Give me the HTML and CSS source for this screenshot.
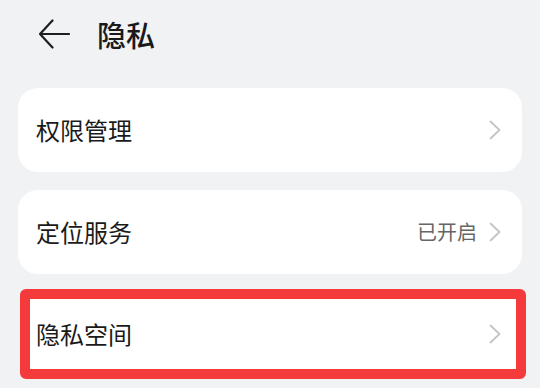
FILE: index.html
```html
<!DOCTYPE html>
<html lang="zh-CN">
  <head>
    <meta name="viewport" content="width=device-width, initial-scale=1.0" />
    <link rel="stylesheet" href="styles.css">
  </head>
  <body>
    <div class="header">
      <svg class="back" width="32" height="30" viewBox="0 0 32 30">
        <path d="M2 15 H31 M14.5 1.5 L2 15 L14.5 28.5" fill="none" stroke="#1f1f1f" stroke-width="2.2" stroke-linecap="round" stroke-linejoin="round" />
      </svg>
      <h1>隐私</h1>
    </div>

    <div class="list">
      <div class="card">
        <span class="label">权限管理</span>
        <svg class="chevron" width="12" height="20" viewBox="0 0 12 20">
          <path d="M1.5 1.5 L10.5 10 L1.5 18.5" fill="none" stroke="#c4c4c4" stroke-width="1.8" stroke-linecap="round" stroke-linejoin="round" />
        </svg>
      </div>
      <div class="card">
        <span class="label">定位服务</span>
        <span class="value">已开启</span>
        <svg class="chevron" width="12" height="20" viewBox="0 0 12 20">
          <path d="M1.5 1.5 L10.5 10 L1.5 18.5" fill="none" stroke="#c4c4c4" stroke-width="1.8" stroke-linecap="round" stroke-linejoin="round" />
        </svg>
      </div>
      <div class="card marked">
        <span class="label">隐私空间</span>
        <svg class="chevron" width="12" height="20" viewBox="0 0 12 20">
          <path d="M1.5 1.5 L10.5 10 L1.5 18.5" fill="none" stroke="#c4c4c4" stroke-width="1.8" stroke-linecap="round" stroke-linejoin="round" />
        </svg>
      </div>
    </div>
  </body>
</html>
```

FILE: styles.css
```css
html,
body {
  margin: 0;
  padding: 0;
  background-color: #f1f2f4;
}
body {
  color: #1a1a1a;
  font-family: "Noto Sans CJK SC", "Noto Sans", sans-serif;
  width: 540px;
  height: 388px;
  overflow: hidden;
}
.header {
  height: 68px;
  display: flex;
  align-items: center;
  padding-left: 38px;
}
.header .back {
  display: block;
  margin-top: 0;
}
h1 {
  margin: 0 0 0 27px;
  font-size: 29px;
  font-weight: 500;
  line-height: 1;
}
.list {
  margin-top: 20px;
}
.card {
  display: flex;
  align-items: center;
  height: 84px;
  margin: 0 18px 18px 18px;
  padding: 0 21px 0 18px;
  background: #ffffff;
  border-radius: 20px;
  box-sizing: border-box;
}
.label {
  flex: 1;
  font-size: 24px;
  line-height: 1;
}
.value {
  font-size: 20px;
  color: #666666;
  margin-right: 12px;
  line-height: 1;
}
.chevron {
  display: block;
}
.card.marked {
  margin: -3px 14px 0 20px;
  height: 90px;
  padding: 0 15px 0 6px;
  border: 10px solid #f53a3b;
  border-radius: 6px;
}
```
